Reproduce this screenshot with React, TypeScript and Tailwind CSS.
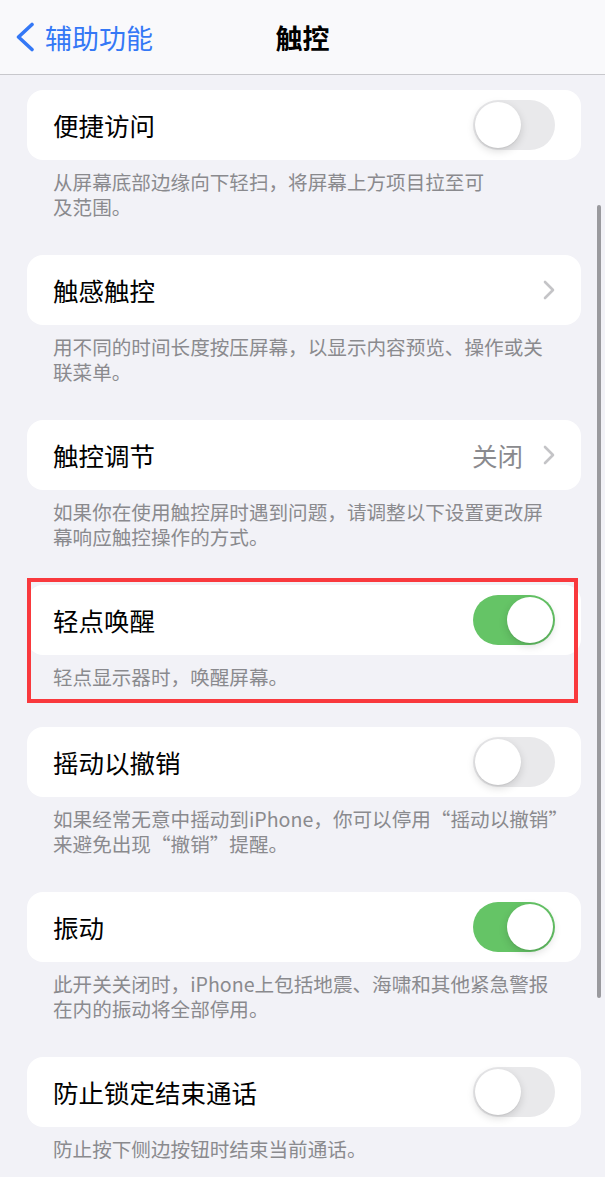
import React from "react";

type Row = {
  label: string;
  kind: "toggle" | "link";
  on?: boolean;
  value?: string;
  footer: string[];
};

const rows: Row[] = [
  {
    label: "便捷访问",
    kind: "toggle",
    on: false,
    footer: ["从屏幕底部边缘向下轻扫，将屏幕上方项目拉至可", "及范围。"],
  },
  {
    label: "触感触控",
    kind: "link",
    footer: ["用不同的时间长度按压屏幕，以显示内容预览、操作或关", "联菜单。"],
  },
  {
    label: "触控调节",
    kind: "link",
    value: "关闭",
    footer: ["如果你在使用触控屏时遇到问题，请调整以下设置更改屏", "幕响应触控操作的方式。"],
  },
  {
    label: "轻点唤醒",
    kind: "toggle",
    on: true,
    footer: ["轻点显示器时，唤醒屏幕。"],
  },
  {
    label: "摇动以撤销",
    kind: "toggle",
    on: false,
    footer: ["如果经常无意中摇动到iPhone，你可以停用“摇动以撤销”", "来避免出现“撤销”提醒。"],
  },
  {
    label: "振动",
    kind: "toggle",
    on: true,
    footer: ["此开关关闭时，iPhone上包括地震、海啸和其他紧急警报", "在内的振动将全部停用。"],
  },
  {
    label: "防止锁定结束通话",
    kind: "toggle",
    on: false,
    footer: ["防止按下侧边按钮时结束当前通话。"],
  },
];

function Toggle({ on }: { on: boolean }) {
  return (
    <div
      className={
        "flex h-[50px] w-[82px] shrink-0 items-center rounded-full p-[2px] " +
        (on ? "justify-end bg-[#65c466]" : "justify-start bg-[#e9e9eb]")
      }
    >
      <div className="size-[46px] rounded-full bg-white shadow-[0_3px_8px_rgba(0,0,0,0.15),0_1px_1px_rgba(0,0,0,0.06)]" />
    </div>
  );
}

function Chevron() {
  return (
    <svg width="12" height="20" viewBox="0 0 12 20" fill="none" className="shrink-0">
      <path d="M2 2l8 8-8 8" stroke="#c4c4c7" strokeWidth="2.6" strokeLinecap="round" strokeLinejoin="round" />
    </svg>
  );
}

export default function App() {
  return (
    <div
      className="relative h-[1177px] w-[605px] overflow-hidden bg-[#f2f2f7]"
      style={{ fontFamily: '"Noto Sans CJK SC", "Noto Sans", sans-serif' }}
    >
      <header className="relative flex h-[75px] items-center border-b border-[#c8c8cc] bg-[#f9f9fb]">
        <div className="flex items-center gap-[10px] pl-[15px] text-[27px] text-[#3478f6]">
          <svg width="20" height="30" viewBox="0 0 20 30" fill="none">
            <path d="M17 2.5L3.5 15 17 27.5" stroke="#3478f6" strokeWidth="3.6" strokeLinecap="round" strokeLinejoin="round" />
          </svg>
          <span className="leading-none">辅助功能</span>
        </div>
        <h1 className="absolute left-1/2 -translate-x-1/2 text-[27px] font-bold leading-none text-black">触控</h1>
      </header>

      <main className="flex flex-col pl-[27px] pr-[24px] pt-[15px]">
        {rows.map((r) => (
          <section key={r.label} className={r.footer.length > 1 ? "mb-[36px]" : "mb-[38px]"}>
            <div className="flex h-[70px] items-center justify-between rounded-[16px] bg-white pl-[26px] pr-[26px]">
              <span className="text-[25.5px] leading-none text-black">{r.label}</span>
              {r.kind === "toggle" ? (
                <Toggle on={!!r.on} />
              ) : (
                <div className="flex items-center gap-[20px]">
                  {r.value && <span className="text-[25.5px] leading-none text-[#8a8a8e]">{r.value}</span>}
                  <Chevron />
                </div>
              )}
            </div>
            <div className="pl-[26px] pt-[9px] text-[19.6px] leading-[25px] text-[#8a8a8e]">
              {r.footer.map((line) => (
                <div key={line} className="whitespace-nowrap">
                  {line}
                </div>
              ))}
            </div>
          </section>
        ))}
      </main>

      {/* scroll indicator */}
      <div className="absolute left-[597px] top-[205px] h-[793px] w-[4px] rounded-full bg-[#9a9a9e]" />

      {/* annotation box */}
      <div className="absolute left-[27px] top-[578px] h-[125px] w-[551px] border-[4px] border-[#f9393d]" />
    </div>
  );
}
